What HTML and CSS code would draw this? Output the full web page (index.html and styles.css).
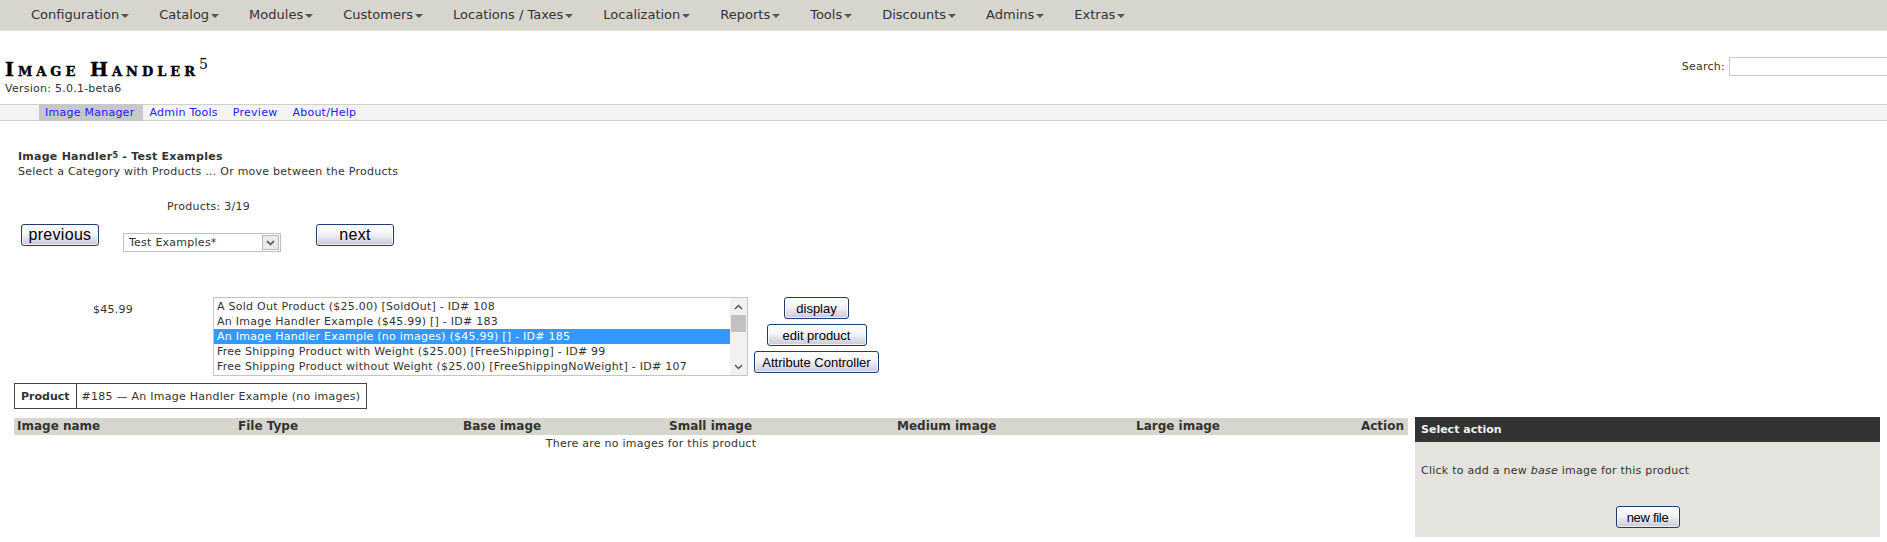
FILE: index.html
```html
<!DOCTYPE html>
<html lang="en">
<head>
<meta charset="utf-8">
<title>Image Handler 5</title>
<link rel="stylesheet" href="styles.css">
</head>
<body>
<nav class="topnav">
  <ul class="menu">
    <li class="menu-item">Configuration<span class="caret"></span></li>
    <li class="menu-item">Catalog<span class="caret"></span></li>
    <li class="menu-item">Modules<span class="caret"></span></li>
    <li class="menu-item">Customers<span class="caret"></span></li>
    <li class="menu-item">Locations / Taxes<span class="caret"></span></li>
    <li class="menu-item">Localization<span class="caret"></span></li>
    <li class="menu-item">Reports<span class="caret"></span></li>
    <li class="menu-item">Tools<span class="caret"></span></li>
    <li class="menu-item">Discounts<span class="caret"></span></li>
    <li class="menu-item">Admins<span class="caret"></span></li>
    <li class="menu-item">Extras<span class="caret"></span></li>
  </ul>
</nav>

<header class="pagehead">
  <div class="brand">
    <h1 class="brand-title">Image Handler<sup class="brand-sup">5</sup></h1>
    <div class="brand-version">Version: 5.0.1-beta6</div>
  </div>
  <form class="search">
    <label class="search-label">Search:</label>
    <input class="search-input" type="text">
  </form>
</header>

<nav class="subnav">
  <a class="subnav-link is-active">Image Manager</a>
  <a class="subnav-link">Admin Tools</a>
  <a class="subnav-link">Preview</a>
  <a class="subnav-link">About/Help</a>
</nav>

<main class="content">
  <section class="intro">
    <h2 class="intro-title">Image Handler<sup class="intro-sup">5</sup> - Test Examples</h2>
    <p class="intro-text">Select a Category with Products ... Or move between the Products</p>
  </section>

  <div class="browse">
    <button class="btn btn-lg" type="button">previous</button>
    <div class="browse-center">
      <div class="counter">Products: 3/19</div>
      <div class="dropdown">
        <span class="dropdown-value">Test Examples*</span>
        <span class="dropdown-arrow">
          <svg width="9" height="6" viewBox="0 0 9 6"><polyline points="1,1 4.5,4.5 8,1" fill="none" stroke="#666" stroke-width="1.8"/></svg>
        </span>
      </div>
    </div>
    <button class="btn btn-lg btn-next" type="button">next</button>
  </div>

  <div class="picker">
    <div class="price">$45.99</div>
    <div class="listbox">
      <ul class="listbox-options">
        <li class="option">A Sold Out Product ($25.00) [SoldOut] - ID# 108</li>
        <li class="option">An Image Handler Example ($45.99) [] - ID# 183</li>
        <li class="option is-selected">An Image Handler Example (no images) ($45.99) [] - ID# 185</li>
        <li class="option">Free Shipping Product with Weight ($25.00) [FreeShipping] - ID# 99</li>
        <li class="option">Free Shipping Product without Weight ($25.00) [FreeShippingNoWeight] - ID# 107</li>
      </ul>
      <div class="scrollbar">
        <div class="scroll-btn"><svg width="9" height="6" viewBox="0 0 9 6"><polyline points="1,5 4.5,1.5 8,5" fill="none" stroke="#505050" stroke-width="1.4"/></svg></div>
        <div class="scroll-thumb"></div>
        <div class="scroll-track"></div>
        <div class="scroll-btn"><svg width="9" height="6" viewBox="0 0 9 6"><polyline points="1,1 4.5,4.5 8,1" fill="none" stroke="#505050" stroke-width="1.4"/></svg></div>
      </div>
    </div>
    <div class="actions">
      <button class="btn btn-display" type="button">display</button>
      <button class="btn btn-edit" type="button">edit product</button>
      <button class="btn btn-attr" type="button">Attribute Controller</button>
    </div>
  </div>

  <table class="product-id">
    <tr>
      <th class="product-id-label">Product</th>
      <td class="product-id-value">#185 — An Image Handler Example (no images)</td>
    </tr>
  </table>

  <div class="images">
    <div class="images-grid">
      <div class="images-th">Image name</div>
      <div class="images-th">File Type</div>
      <div class="images-th">Base image</div>
      <div class="images-th">Small image</div>
      <div class="images-th">Medium image</div>
      <div class="images-th">Large image</div>
      <div class="images-th images-th-action">Action</div>
      <div class="images-empty">There are no images for this product</div>
    </div>
    <aside class="action-panel">
      <div class="action-panel-head">Select action</div>
      <div class="action-panel-body">
        <p class="action-panel-text">Click to add a new <em>base</em> image for this product</p>
        <div class="action-panel-btnrow">
          <button class="btn btn-newfile" type="button">new file</button>
        </div>
      </div>
    </aside>
  </div>
</main>
</body>
</html>
```

FILE: styles.css
```css
* { box-sizing: border-box; }
html { overflow-x: hidden; }
body {
  margin: 0;
  font-family: "DejaVu Sans", Verdana, sans-serif;
  font-size: 11px;
  letter-spacing: 0.25px;
  color: #333;
  background: #fff;
}

/* top menu */
.topnav {
  background: #d6d6ce;
  height: 31px;
  border-bottom: 1px solid #e3e3df;
}
.menu {
  list-style: none;
  margin: 0;
  padding: 0 0 0 16px;
  display: flex;
}
.menu-item {
  padding: 0 15px;
  line-height: 30px;
  font-size: 13px;
  letter-spacing: 0;
  color: #333;
  white-space: nowrap;
}
.caret {
  display: inline-block;
  width: 0;
  height: 0;
  border-left: 4px solid transparent;
  border-right: 4px solid transparent;
  border-top: 4px solid #555;
  margin-left: 2px;
  vertical-align: middle;
}

/* page head */
.pagehead {
  display: flex;
  justify-content: space-between;
  align-items: flex-start;
  padding: 26px 0 8px 5px;
}
.brand-title {
  margin: 1px 0 0;
  font-family: "DejaVu Serif", "Liberation Serif", serif;
  font-weight: bold;
  font-variant: small-caps;
  font-size: 19px;
  line-height: 23px;
  letter-spacing: 4px;
  color: #000;
  -webkit-text-stroke: 0.4px #000;
}
.brand-sup {
  font-size: 14px;
  font-weight: normal;
  font-variant: normal;
  letter-spacing: 0;
  line-height: 0;
  vertical-align: super;
  -webkit-text-stroke: 0;
}
.brand-version {
  line-height: 15px;
  color: #333;
}
.search {
  display: flex;
  align-items: center;
  margin: 0 -26px 0 0;
}
.search-label {
  margin-right: 4px;
  color: #333;
}
.search-input {
  width: 184px;
  height: 19px;
  border: 1px solid #c8c8c8;
  padding: 0 2px;
  font: inherit;
}

/* sub navigation */
.subnav {
  display: flex;
  height: 17px;
  border-top: 1px solid #d0d0d0;
  border-bottom: 1px solid #d0d0d0;
  background: #f3f3f3;
  padding-left: 39px;
}
.subnav-link {
  padding: 0 9px 0 6px;
  line-height: 15px;
  color: #2121ff;
  text-decoration: none;
}
.subnav-link.is-active {
  background: #c8c8c8;
  margin: -1px 0;
  line-height: 17px;
}

/* content */
.content {
  padding: 28px 7px 20px 14px;
}
.intro { padding-left: 4px; }
.intro-title {
  margin: 0;
  font-size: 11px;
  line-height: 15px;
  font-weight: bold;
}
.intro-sup {
  font-size: 8px;
  line-height: 0;
  vertical-align: 2px;
}
.intro-text {
  margin: 0;
  line-height: 15px;
}

/* buttons */
.btn {
  font-family: "Liberation Sans", Arial, sans-serif;
  font-size: 13px;
  letter-spacing: 0;
  color: #000;
  height: 22px;
  padding: 0;
  border: 1px solid #1f3d6c;
  border-radius: 3px;
  background: linear-gradient(#ffffff 0%, #f3f3f7 45%, #c8c8da 100%);
  box-shadow: inset 0 0 0 1px rgba(255, 255, 255, 0.7);
}
.btn-lg {
  width: 78px;
  font-size: 16px;
  letter-spacing: 0.3px;
  margin-top: 25px;
}
.btn-display { width: 65px; }
.btn-edit { width: 100px; }
.btn-attr { width: 125px; }
.btn-newfile { width: 64px; letter-spacing: -0.3px; }

/* browse row */
.browse {
  display: flex;
  align-items: flex-start;
  margin-top: 20px;
  padding-left: 7px;
}
.browse-center {
  width: 158px;
  margin-left: 24px;
}
.counter {
  padding-left: 44px;
  line-height: 15px;
}
.dropdown {
  display: flex;
  align-items: center;
  height: 19px;
  margin-top: 19px;
  padding: 0 1px 0 5px;
  border: 1px solid #c0c0c0;
  background: #fff;
}
.dropdown-value { flex: 1; }
.dropdown-arrow {
  width: 17px;
  height: 15px;
  display: flex;
  align-items: center;
  justify-content: center;
  background: #ebebeb;
  border: 1px solid #b8b8b8;
}
.btn-next { margin-left: 35px; }

/* product picker */
.picker {
  display: grid;
  grid-template-columns: 199px 535px 131px;
  align-items: start;
  margin-top: 45px;
}
.price {
  padding: 5px 0 0 79px;
  line-height: 15px;
}
.listbox {
  display: flex;
  width: 535px;
  height: 79px;
  border: 1px solid #c5c5c5;
  background: #fff;
}
.listbox-options {
  list-style: none;
  margin: 0;
  padding: 1px 0;
  flex: 1;
  min-width: 0;
}
.option {
  height: 15px;
  line-height: 15px;
  padding-left: 3px;
  letter-spacing: 0.25px;
  white-space: nowrap;
  overflow: hidden;
}
.option.is-selected {
  background: #3399ff;
  color: #fff;
}
.scrollbar {
  width: 17px;
  background: #f1f1f1;
  display: flex;
  flex-direction: column;
}
.scroll-btn {
  height: 17px;
  display: flex;
  align-items: center;
  justify-content: center;
}
.scroll-thumb {
  height: 17px;
  margin: 0 1px;
  background: #c1c1c1;
}
.scroll-track { flex: 1; }
.actions {
  display: flex;
  flex-direction: column;
  align-items: center;
  gap: 5px;
  width: 125px;
  margin-left: 6px;
}

/* product id table */
.product-id {
  margin-top: 7px;
  border-collapse: collapse;
  border: 1px solid #444;
}
.product-id-label,
.product-id-value {
  border: 1px solid #444;
  padding: 5px 6px 4px 6px;
  line-height: 15px;
  font-size: 11px;
  text-align: left;
}
.product-id-label { font-weight: bold; letter-spacing: 0; }
.product-id-value { padding-left: 5px; font-weight: normal; }

/* images */
.images {
  display: flex;
  align-items: flex-start;
  gap: 7px;
  margin-top: 8px;
}
.images-grid {
  display: grid;
  grid-template-columns: 221px 225px 206px 228px 239px 155px 120px;
  width: 1394px;
  margin-top: 1px;
}
.images-th {
  background: #d6d6ce;
  height: 17px;
  line-height: 17px;
  padding-left: 3px;
  font-size: 12px;
  font-weight: bold;
  letter-spacing: 0;
  color: #333;
  white-space: nowrap;
}
.images-th-action {
  text-align: right;
  padding: 0 4px 0 0;
}
.images-empty {
  grid-column: 1 / 7;
  text-align: center;
  line-height: 15px;
  padding-top: 1px;
}
.action-panel {
  width: 465px;
}
.action-panel-head {
  height: 25px;
  line-height: 25px;
  padding-left: 6px;
  background: #333;
  color: #f2f2f2;
  font-weight: bold;
  letter-spacing: 0;
}
.action-panel-body {
  height: 95px;
  padding: 21px 6px 9px;
  background: #e4e3de;
}
.action-panel-text {
  margin: 0;
  line-height: 15px;
}
.action-panel-btnrow {
  display: flex;
  justify-content: center;
  margin-top: 28px;
}
```
